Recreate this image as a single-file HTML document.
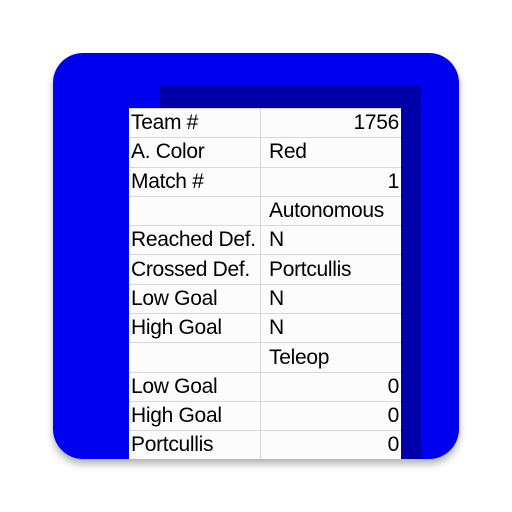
<!DOCTYPE html>
<html><head><style>
html,body{margin:0;padding:0;background:#fff;width:512px;height:512px;overflow:hidden}
.icon{position:absolute;left:53px;top:53px;width:406px;height:406px;border-radius:30px;background:#0000f0;overflow:hidden;box-shadow:0 5px 8px rgba(0,0,0,0.3)}
.dark{position:absolute;left:106px;top:32px;width:262px;height:380px;background:#0000a8}
table{position:absolute;left:76px;top:55px;width:272px;border-collapse:collapse;background:#fcfcfc;font-family:"Liberation Sans",sans-serif;font-size:21px;color:#000;table-layout:fixed}
td{height:28.3px;padding:0 2px;border:1px solid #d8d8d8;line-height:28px;white-space:nowrap;letter-spacing:-0.3px;overflow:hidden}
td:first-child{width:127px;border-left:none}
td:last-child{border-right:none}
td.r{text-align:right}
td.v{padding-left:8px}
</style></head><body>
<div class="icon">
<div class="dark"></div>
<table>
<tr><td>Team #</td><td class="r">1756</td></tr>
<tr><td>A. Color</td><td class="v">Red</td></tr>
<tr><td>Match #</td><td class="r">1</td></tr>
<tr><td></td><td class="v">Autonomous</td></tr>
<tr><td>Reached Def.</td><td class="v">N</td></tr>
<tr><td>Crossed Def.</td><td class="v">Portcullis</td></tr>
<tr><td>Low Goal</td><td class="v">N</td></tr>
<tr><td>High Goal</td><td class="v">N</td></tr>
<tr><td></td><td class="v">Teleop</td></tr>
<tr><td>Low Goal</td><td class="r">0</td></tr>
<tr><td>High Goal</td><td class="r">0</td></tr>
<tr><td>Portcullis</td><td class="r">0</td></tr>
</table>
</div>
</body></html>
